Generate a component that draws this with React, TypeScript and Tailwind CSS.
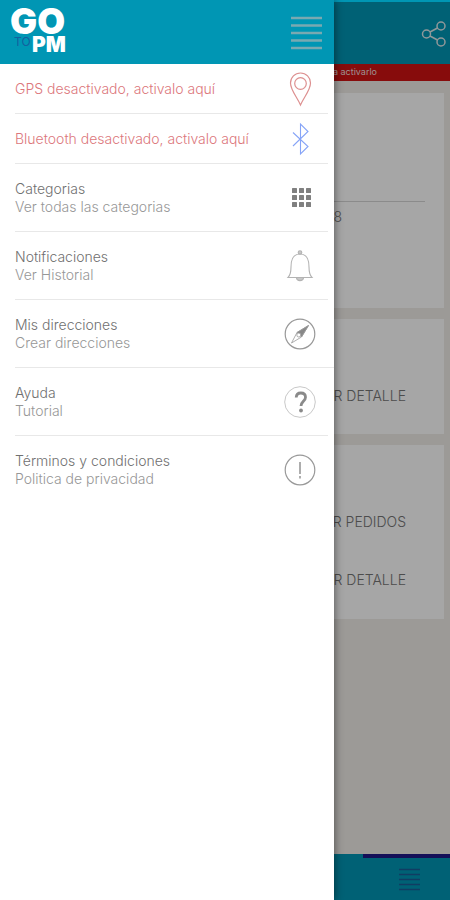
import React from 'react';

interface MenuItem {
  title: string;
  subtitle?: string;
  icon: React.ReactNode;
  alert?: boolean;
  wide?: boolean;
}

const PinIcon = () => (
  <svg width="32" height="36" viewBox="0 0 32 36" fill="none" stroke="#dd9090" strokeWidth="1.200">
    <path d="M16.500 34C13 26 6.500 19 6.500 12a10 10 0 0 1 20 0c0 7-6.500 14-10 22Z" />
    <circle cx="16.500" cy="12.500" r="5.800" />
  </svg>
);

const BluetoothIcon = () => (
  <svg width="32" height="36" viewBox="0 0 32 36" fill="none" stroke="#86a4f7" strokeWidth="1.100">
    <path d="M9 11.500l15 14-7.500 7.500V3l7.500 7.500L9 25" />
  </svg>
);

const GridIcon = () => (
  <svg width="32" height="32" viewBox="0 0 32 32" fill="#808080">
    {[8, 15, 22].map((y) =>
      [8, 15, 22].map((x) => <rect key={`${x}-${y}`} x={x} y={y - 2} width="5" height="5" rx="0.500" />)
    )}
  </svg>
);

const BellIcon = () => (
  <svg width="32" height="36" viewBox="0 0 32 36" fill="none" stroke="#b3b3b3" strokeWidth="1.100">
    <circle cx="16" cy="4.500" r="1.800" fill="#c8c8c8" />
    <path d="M4 29.500c2.500-2.500 3-6 3-10.500 0-8 3-13 9-13s9 5 9 13c0 4.500.5 8 3 10.500Z" />
    <path d="M12.500 30c.3 3.500 6.700 3.500 7 0" fill="#c8c8c8" />
  </svg>
);

const CompassIcon = () => (
  <svg width="32" height="32" viewBox="0 0 32 32" fill="none" stroke="#999999" strokeWidth="1.200">
    <circle cx="16" cy="16" r="14.800" />
    <path d="M24.500 7.500L13 14.500 7.500 25l10-6Z" strokeWidth="0.800" />
    <path d="M24.500 7.500L13 14.500l4.500 4.500Z" fill="#888888" strokeWidth="0.800" />
    <circle cx="14.800" cy="17" r="2" fill="#ffffff" strokeWidth="0.800" />
  </svg>
);

const HelpIcon = () => (
  <svg width="32" height="32" viewBox="0 0 32 32" fill="none">
    <circle cx="16" cy="16" r="15.300" stroke="#c8c8c8" />
    <path d="M12.200 11.500c.2-3 2-4.500 4.600-4.500 2.800 0 4.700 1.600 4.700 4.200 0 4-4.500 4.300-4.500 8.800" stroke="#8a8a8a" strokeWidth="2.800" />
    <circle cx="17" cy="24.500" r="1.900" fill="#8a8a8a" />
  </svg>
);

const InfoIcon = () => (
  <svg width="32" height="32" viewBox="0 0 32 32" fill="none" stroke="#999999" strokeWidth="1.200">
    <circle cx="16" cy="16" r="14.800" />
    <path d="M16 8v12M16 22v2.500" strokeWidth="1.600" />
  </svg>
);

const ShareIcon = () => (
  <svg width="26" height="28" viewBox="0 0 26 28" fill="none" stroke="#dde9ec" strokeWidth="1.500">
    <circle cx="5.500" cy="14" r="4" />
    <circle cx="20" cy="6" r="4" />
    <circle cx="20" cy="22" r="4" />
    <path d="M9 12l7.500-4M9 16l7.500 4" />
  </svg>
);

const Logo = () => (
  <svg width="64" height="64" viewBox="0 0 64 64" role="img" aria-label="GO TO PM" className="font-['Inter',sans-serif]">
    <text x="4" y="46" fontSize="12" fill="#155f9f">TO</text>
    <text x="0" y="34" fontSize="36" fontWeight="900" fill="#ffffff">GO</text>
    <text x="22" y="52" fontSize="21" fontWeight="900" fill="#ffffff">PM</text>
  </svg>
);

const menuItems: MenuItem[] = [
  { title: 'GPS desactivado, activalo aquí', icon: <PinIcon />, alert: true },
  { title: 'Bluetooth desactivado, activalo aquí', icon: <BluetoothIcon />, alert: true },
  { title: 'Categorias', subtitle: 'Ver todas las categorias', icon: <GridIcon /> },
  { title: 'Notificaciones', subtitle: 'Ver Historial', icon: <BellIcon /> },
  { title: 'Mis direcciones', subtitle: 'Crear direcciones', icon: <CompassIcon />, wide: true },
  { title: 'Ayuda', subtitle: 'Tutorial', icon: <HelpIcon /> },
  { title: 'Términos y condiciones', subtitle: 'Politica de privacidad', icon: <InfoIcon /> },
];

const MenuRow: React.FC<{ item: MenuItem; last: boolean }> = ({ item, last }) => (
  <li className={`ml-[15px] ${item.wide ? 'pr-0' : 'pr-[6px]'}`}>
    <button
      type="button"
      className={`flex w-full items-center justify-between text-left ${item.alert ? 'h-[50px]' : 'h-[68px]'} ${
        item.wide ? 'pr-[18px]' : 'pr-3'
      } ${last ? '' : 'border-b border-[#e8e8e8]'}`}
    >
      <span className="flex flex-col text-sm leading-[18px] font-light">
        <span className={item.alert ? 'text-[#dc777c]' : 'text-[#707070]'}>{item.title}</span>
        {item.subtitle && <span className="text-[#979797]">{item.subtitle}</span>}
      </span>
      {item.icon}
    </button>
  </li>
);

const Drawer = () => (
  <aside className="absolute inset-y-0 left-0 w-[334px] max-w-[85%] bg-white shadow-[1px_0_8px_rgba(0,0,0,0.45)]">
    <header className="flex h-16 items-center justify-between bg-[#0096b4] pr-3 pl-[10px]">
      <Logo />
      <button type="button" aria-label="Cerrar menú" className="pt-px">
        <svg width="32" height="36" viewBox="0 0 32 36" stroke="#79a9b1" strokeWidth="2.500">
          <path d="M1 3h31M1 10.500h31M1 18h31M1 25.500h31M1 33h31" />
        </svg>
      </button>
    </header>
    <nav>
      <ul>
        {menuItems.map((item, i) => (
          <MenuRow key={item.title} item={item} last={i === menuItems.length - 1} />
        ))}
      </ul>
    </nav>
  </aside>
);

const CardButton: React.FC<{ label: string }> = ({ label }) => (
  <button type="button" className="self-end text-sm leading-5 font-light text-[#757575]">
    {label}
  </button>
);

const HomePage = () => (
  <div className="flex min-h-screen flex-col bg-[#f0ede9]">
    <header className="flex h-16 items-center justify-end bg-[#0096b4] pr-[3px]">
      <button type="button" aria-label="Compartir" className="pt-[3px]">
        <ShareIcon />
      </button>
    </header>
    <p className="h-[17px] bg-[#cf1313] pr-[73px] text-right text-[9px] leading-[15px] text-[#f2dede]">
      a activarlo
    </p>
    <main className="flex grow flex-col gap-[11px] px-[6px] pt-3">
      <section className="flex h-[215px] flex-col bg-white pt-[108px]">
        <hr className="mr-[19px] border-[#d6d6d6]" />
        <span className="mt-[5px] mr-[102px] self-end text-sm leading-5 font-light text-[#757575]">8</span>
      </section>
      <section className="flex h-[115px] flex-col bg-white pt-[67px] pr-[38px]">
        <CardButton label="VER DETALLE" />
      </section>
      <section className="flex h-[174px] flex-col gap-[38px] bg-white pt-[67px] pr-[38px]">
        <CardButton label="VER PEDIDOS" />
        <CardButton label="VER DETALLE" />
      </section>
    </main>
    <footer className="flex h-[46px] flex-col items-end bg-[#0096b4]">
      <div className="h-1 w-[87px] bg-[#1f1888]" />
      <button type="button" aria-label="Menú" className="mt-[9px] mr-[30px]">
        <svg width="21" height="24" viewBox="0 0 21 24" stroke="#1b5f98" strokeWidth="1.500">
          <path d="M0 2.500h21M0 7.500h21M0 12.500h21M0 17.500h21M0 22.500h21" />
        </svg>
      </button>
    </footer>
  </div>
);

const App = () => (
  <div className="relative min-h-screen overflow-hidden font-['Inter','Liberation_Sans',sans-serif]">
    <HomePage />
    <div className="absolute inset-x-0 top-[2px] bottom-0 bg-black/35" />
    <Drawer />
  </div>
);

export default App;
